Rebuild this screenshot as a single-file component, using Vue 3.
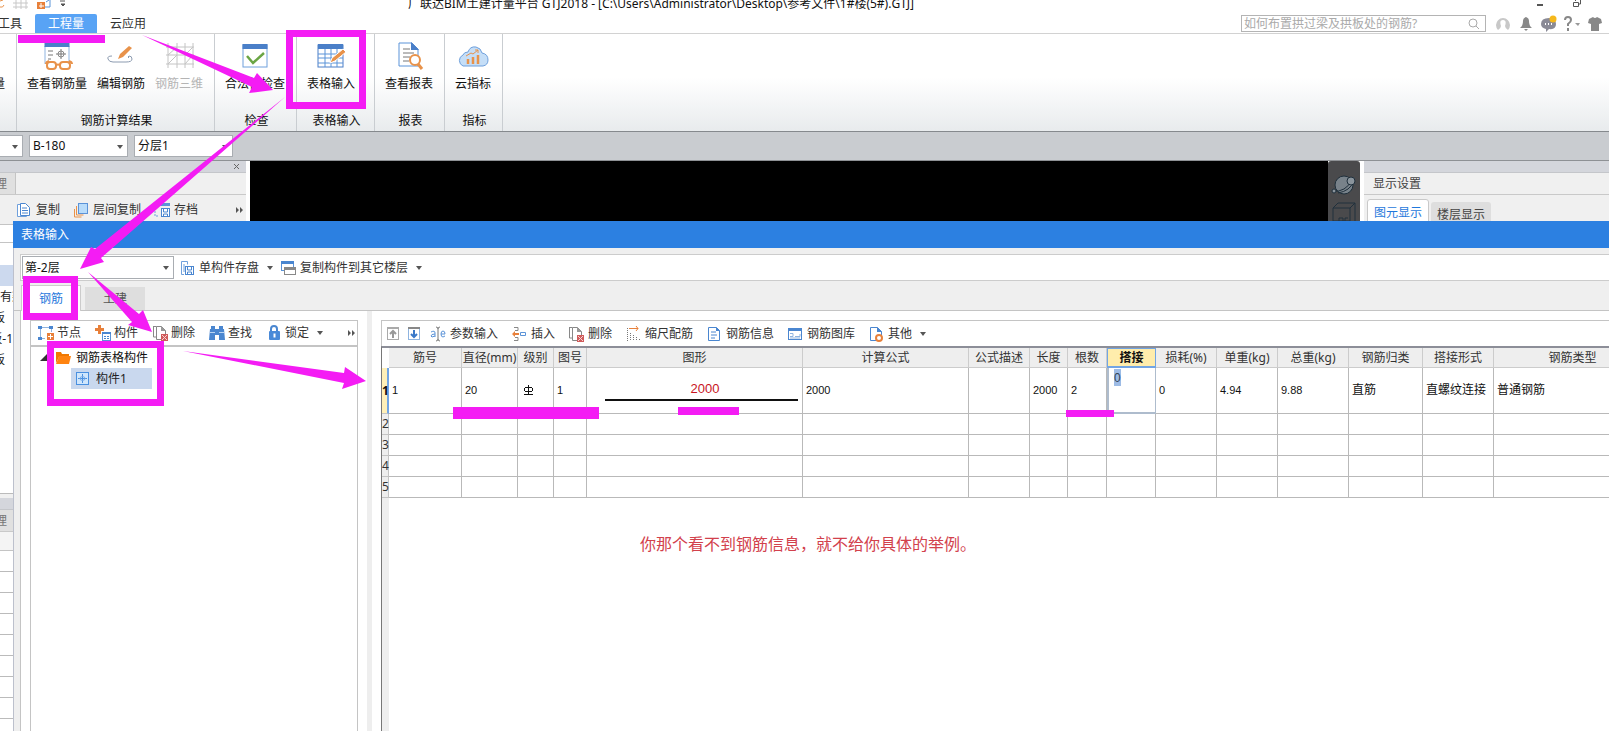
<script setup>
import { ref } from 'vue'

const icons = {
  viewBars: '<path d="M4 4V22M28 4V22" stroke="#8fb4e0" fill="none"/><path d="M3.500 1h25v4h-25z" fill="#4a7fc8"/><path d="M7 9h5M7 13h5M7 17h3M15 12h10M20 7v10" stroke="#777" fill="none"/><path d="M17 12q0-3 3-3t3 3-3 3-3-3" stroke="#888" fill="none"/><g fill="none" stroke="#e8924a" stroke-width="2"><path d="M8 19q-3 1-3 3M28 19q3 1 3 3M15 23q2-1 4 0"/><rect x="6" y="20" width="9" height="7" rx="3"/><rect x="19" y="20" width="10" height="7" rx="3"/></g>',
  editBars: '<path d="M7 14q-5 0-4 3t5 3h13q6 0 6-3t-3-3q-2 1 0 2" stroke="#8c9bb0" fill="none"/><path d="M13 17l2-5L24 4l3 2-9 9z" fill="#e8924a"/>',
  bars3d: '<path d="M5 1v25M14 1v25M22 1v25M30 1v25M3 5h28M3 13h28M3 22h28M5 13l9-8M22 13l8-8M5 22l9-9M22 22l8-9" stroke="#c4c4c4" fill="none"/>',
  check: '<rect x="4" y="3" width="24" height="22" fill="#fff" stroke="#6fa0dc"/><path d="M3.500 2h25v5h-25z" fill="#4a7fc8"/><path d="M8 14l6 7L25 11" stroke="#6aa544" stroke-width="2.500" fill="none"/>',
  tableInput: '<rect x="3" y="3" width="25" height="22" fill="#fff" stroke="#4a7fc8"/><path d="M3 2h25v5H3z" fill="#4a7fc8"/><path d="M3 12h25M3 16h25M3 21h25M10 7v18M16 7v18M22 7v18" stroke="#5b93d8" fill="none"/><path d="M15 21l2-5L28 7l3 3-11 9z" fill="#e8924a" stroke="#fff"/>',
  report: '<path d="M6 1h13l6 6v17H6z" fill="#fff" stroke="#5b93d8"/><path d="M18 0l8 8h-8z" fill="#4a7fc8"/><path d="M10 7h7M10 11h11M10 15h7M10 19h6" stroke="#777" fill="none"/><circle cx="22" cy="18" r="5" stroke="#e8924a" stroke-width="2" fill="#fff"/><path d="M25 22l4 5" stroke="#e8924a" stroke-width="3"/>',
  cloud: '<path d="M6 24a6 6 0 0 1 0-11q1-3 5-3 2-6 8-5 5 1 6 6 6 1 6 7 0 5-5 6z" fill="#c5def7" stroke="#6fa0dc"/><path d="M11 17v5M16 15v7M21 13v9" stroke="#e8924a" stroke-width="2.500"/><path d="M9 14l5-3 2 1 5-4M18 8h3v3" stroke="#e8924a" fill="none"/>',
  copy: '<path d="M1.500 2.500h3v10h6v2h-9z" fill="#fff" stroke="#6fa0dc"/><path d="M4.500 1.500h5l4 4v8h-9z" fill="#fff" stroke="#4a86d0"/><path d="M6 6h5M6 8.500h6M6 11h6" stroke="#4a86d0"/>',
  layers: '<path d="M1.500 7v8h7" fill="none" stroke="#e8924a"/><path d="M3.500 4v9h7" fill="none" stroke="#e8924a"/><rect x="5.500" y="1.500" width="9" height="10" fill="#b9dcfa" stroke="#5b93d8"/>',
  archive: '<path d="M1 6v8h4" stroke="#6fa0dc" stroke-dasharray="2 1" fill="none"/><path d="M5 1h11v3H5z" fill="#5b93d8"/><rect x="7.500" y="6.500" width="8" height="8" fill="#fff" stroke="#4a86d0"/><path d="M9.500 7v3h4V7M9.500 14v-2h4v2" stroke="#4a86d0" fill="none"/>',
  save: '<path d="M5 14.500H2.500v-13h6v3M5 4v8" stroke="#6fa0dc" fill="none"/><rect x="6.500" y="6.500" width="8" height="8" fill="#fff" stroke="#4a86d0"/><path d="M8.500 7v3h4V7M8.500 14v-2h4v2" stroke="#4a86d0" fill="none"/>',
  copyTo: '<rect x="1.500" y="1.500" width="12" height="9" fill="#fff" stroke="#5b93d8"/><path d="M1 1h13v3H1z" fill="#4a86d0"/><rect x="4.500" y="7.500" width="11" height="7" fill="#fff" stroke="#888"/><path d="M4 7h12v3H4z" fill="#888"/>',
  node: '<path d="M2.500 3v10M3 2.500h10M13.500 3v4M3 13.500h4" stroke="#8fb4e0"/><path d="M0 1h4v3H0zM11 1h4v3h-4zM0 12h4v3H0z" fill="#4a86d0"/><path d="M9 8h7v7H9z" fill="#e8803a"/><path d="M12.500 9v5M10 11.500h5" stroke="#fff"/>',
  member: '<path d="M3 0h3v3h3v3H6v3H3V6H0V3h3z" fill="#e8803a"/><rect x="7.500" y="7.500" width="8" height="8" fill="#fff" stroke="#5b93d8"/><path d="M7 7h9v2H7z" fill="#4a86d0"/><path d="M9 11.500h2M12 11.500h2M9 13.500h2M12 13.500h2" stroke="#4a86d0"/>',
  remove: '<path d="M1.500 1.500h3M1.500 1v11h3" stroke="#888" fill="none"/><path d="M4.500 1.500h5l4 4v9h-9z" fill="#fff" stroke="#888"/><path d="M9 1v5h5z" fill="#999"/><path d="M9 9h7v7H9z" fill="#d05b5b"/><path d="M10 10l5 5M15 10l-5 5" stroke="#f6d5d5"/>',
  find: '<path d="M2 1h4v3h4V1h4v3h1l1 11h-6v-5H6v5H0L1 4h1z" fill="#4a86d0"/><path d="M1 7.500h5M10 7.500h5" stroke="#b9d4f2"/>',
  lock: '<path d="M5 7V4q0-3 3-3t3 3v3" stroke="#4a86d0" stroke-width="2" fill="none"/><rect x="3" y="6" width="11" height="9" rx="1" fill="#4a8ad8"/><path d="M8.500 8.500v4" stroke="#fff" stroke-width="2"/>',
  up: '<rect x="1.500" y="1.500" width="11" height="12" fill="#fff" stroke="#aaa"/><path d="M1 1h12v2H1z" fill="#aaa"/><path d="M7 12V6M4 8l3-3 3 3" stroke="#999" stroke-width="2" fill="none"/>',
  down: '<rect x="1.500" y="1.500" width="11" height="12" fill="#fff" stroke="#8fb4e0"/><path d="M1 1h12v2H1z" fill="#888"/><path d="M7 4v7M4 8l3 3 3-3" stroke="#3a78c8" stroke-width="2" fill="none"/>',
  params: '<g fill="none" stroke="#5b93d8"><path d="M1 6q4-2 4 1v4M5 8q-4 0-4 2t4 0"/><path d="M11 8h4q0-3-2-3t-2 3 2 3l2-1"/></g><path d="M6 1q2 0 2 2v10M10 1q-2 0-2 2M6 15q2 0 2-2 0 2 2 2" stroke="#777" fill="none"/>',
  insert: '<path d="M3 1.500h4v3H4M3 14.500h4v-3H4" fill="none" stroke="#888"/><path d="M1 8l3-3v2h4v2H4v2z" fill="#e8803a"/><path d="M9.500 6.500h5v3h-5z" fill="#fff" stroke="#5b93d8"/>',
  scale: '<path d="M2.500 2v13M5.500 7v8M8.500 9v6M11.500 11v4M14.500 13v2" stroke="#777" stroke-dasharray="1 1"/><path d="M4 2.500h9M11 0l2 2.500-2 2.500" stroke="#e8803a" fill="none"/>',
  info: '<path d="M2.500 1.500h8l3 3v10h-11z" fill="#fff" stroke="#4a86d0"/><path d="M10 1v4h4z" fill="#4a86d0"/><path d="M5 6h5M5 9h6M5 12h4" stroke="#4a86d0"/>',
  gallery: '<rect x="1.500" y="2.500" width="13" height="11" fill="#fff" stroke="#4a86d0"/><path d="M1 2h14v3H1z" fill="#4a86d0"/><path d="M3 7.500h3v3H3M8 10.500h5V8M3 12h10" stroke="#8fb4e0" fill="none"/>',
  other: '<path d="M2.500 1.500h7l4 4v9h-11z" fill="#fff" stroke="#4a86d0"/><path d="M9 1v5h5z" fill="#4a86d0"/><circle cx="11" cy="12" r="3" fill="#fff" stroke="#e8803a" stroke-width="2"/>',
  folder: '<path d="M1 2h5l1 2h7v3H4l-3 6z" fill="#f07800"/><path d="M4 6h12l-2 8H1z" fill="#ff8410"/>',
  part: '<rect x="1.500" y="1.500" width="12" height="12" fill="#cfe6fc" stroke="#4a90e0"/><path d="M3 7.500h9M7.500 3v9" stroke="#4a90e0"/><path d="M5 7.500q0-2 2.500-2t2.500 2-2.500 2-2.500-2" fill="none" stroke="#7fb0ea"/>'
}

const ribbon = [
  { title: '钢筋计算结果', items: [['viewBars', '查看钢筋量'], ['editBars', '编辑钢筋'], ['bars3d', '钢筋三维', true]] },
  { title: '检查', items: [['check', '合法性检查']] },
  { title: '表格输入', items: [['tableInput', '表格输入']], wide: true },
  { title: '报表', items: [['report', '查看报表']] },
  { title: '指标', items: [['cloud', '云指标']] }
]
const paneTools = [['copy', '复制'], ['layers', '层间复制'], ['archive', '存档']]
const treeTools = [['node', '节点'], ['member', '构件'], ['remove', '删除'], ['find', '查找'], ['lock', '锁定']]
const gridTools = [
  ['params', '参数输入'], ['insert', '插入'], ['remove', '删除'], ['scale', '缩尺配筋'],
  ['info', '钢筋信息'], ['gallery', '钢筋图库'], ['other', '其他']
]
const columns = [
  ['筋号', 73], ['直径(mm)', 56], ['级别', 36], ['图号', 33], ['图形', 216], ['计算公式', 166],
  ['公式描述', 61], ['长度', 38], ['根数', 39], ['搭接', 49], ['损耗(%)', 61], ['单重(kg)', 61],
  ['总重(kg)', 71], ['钢筋归类', 74], ['搭接形式', 71], ['钢筋类型', 158]
]
const values = ['1', '20', '', '1', '2000', '2000', '', '2000', '2', '0', '0', '4.94', '9.88', '直筋', '直螺纹连接', '普通钢筋']
const overlap = ref('0')
const keyword = ref('')
</script>

<template>
  <div class="app">
    <header class="titlebar">
      <svg class="quick" width="72" height="12">
        <path d="M0 7q3 1 4-2M0 1l3-1" stroke="#e8924a" fill="none" />
        <path d="M13 3h15M13 7h15M16 0v9M21 0v9M26 0v9" stroke="#c8c8c8" />
        <path d="M37 2h8v7h-8z" fill="#e8803a" /><path d="M41 3v5M39 6h5" stroke="#fff" />
        <path d="M45 7h5V0M46 2l3-2" stroke="#5b93d8" fill="none" />
        <path d="M60 1h5M61 4h4l-2 2z" stroke="#555" fill="#555" />
      </svg>
      <h1>广联达BIM土建计量平台 GTJ2018 - [C:\Users\Administrator\Desktop\参考文件\1#楼(5#).GTJ]</h1>
      <div class="winbtns">
        <button aria-label="最小化"><svg width="10" height="10"><path d="M2 5h6" stroke="#555" stroke-width="2" /></svg></button>
        <button aria-label="还原"><svg width="10" height="10"><path d="M1.500 2.500h5v4h-5zM3.500 1V0M8.500 0v4H7" stroke="#555" fill="none" /></svg></button>
      </div>
    </header>

    <nav class="menu">
      <a href="#" class="clipped">工具</a>
      <a href="#" class="active">工程量</a>
      <a href="#">云应用</a>
      <div class="search">
        <input v-model="keyword" aria-label="搜索" placeholder="如何布置拱过梁及拱板处的钢筋?" />
        <svg width="14" height="14"><circle cx="6" cy="6" r="4" fill="none" stroke="#aaa" /><path d="M9 9l3 3" stroke="#aaa" /></svg>
      </div>
      <svg class="status" width="110" height="18">
        <path d="M3 15A7 7 0 1 1 13 15Q10 13 10 11 12 5 8 5T6 11Q6 13 3 15z" fill="#c8c8c8" />
        <path d="M25 13q3-2 3-7 0-3 3-4 3 1 3 4 0 5 3 7zM29 14h4l-2 2z" fill="#888" />
        <path d="M54 3q7 0 7 6t-7 5l-3 3v-3q-5-1-5-5 0-6 8-6z" fill="#8a8a96" /><path d="M50 9h1M53 9h1M56 9h1" stroke="#fff" stroke-width="2" /><circle cx="58" cy="4" r="3.500" fill="#f5b81c" />
        <path d="M70 5q0-3 3-3t3 3q0 2-3 4v2M73 13v3" stroke="#888" stroke-width="2" fill="none" />
        <path d="M80 8h5l-2 3z" fill="#999" />
        <path d="M94 4l4-2q2 2 4 0l4 2 1 4-3 1v7h-8V9l-3-1z" fill="#888" />
      </svg>
    </nav>

    <section class="ribbon">
      <div class="group edge"><span>量</span></div>
      <div v-for="g in ribbon" :key="g.title" class="group" :class="{ wide: g.wide }">
        <div class="cmds">
          <button v-for="c in g.items" :key="c[1]" :disabled="c[2]">
            <svg width="32" height="28" v-html="icons[c[0]]"></svg>{{ c[1] }}
          </button>
        </div>
        <div class="gtitle">{{ g.title }}</div>
      </div>
    </section>

    <section class="scopebar">
      <span class="pick first"><select aria-label="类型"><option></option></select></span>
      <span class="pick"><select aria-label="构件"><option>B-180</option></select></span>
      <span class="pick"><select aria-label="分层"><option>分层1</option></select></span>
    </section>

    <main>
      <aside class="left">
        <div class="strip"><button aria-label="关闭"><svg width="8" height="8"><path d="M1 1l5 5M6 1l-5 5" stroke="#666" /></svg></button></div>
        <div class="tabrow"><span>理</span></div>
        <div class="tools">
          <button v-for="t in paneTools" :key="t[1]"><svg width="16" height="16" v-html="icons[t[0]]"></svg>{{ t[1] }}</button>
          <svg class="more" width="8" height="8"><path d="M0 1l3 3-3 3zM4 1l3 3-3 3z" fill="#555" /></svg>
        </div>
        <div class="peek">
          <div class="gap"></div>
          <div class="sel"></div>
          <div class="name start">有梁</div>
          <div class="name">板</div>
          <div class="name full">板-1</div>
          <div class="name">板</div>
        </div>
        <div class="props">
          <div class="strip"></div>
          <div class="tabrow"><span>理</span></div>
          <div class="subhead"></div>
          <div v-for="n in 9" :key="n" class="line"></div>
        </div>
      </aside>
      <div class="canvas"></div>
      <div class="viewtools">
        <svg width="32" height="60">
          <circle cx="16" cy="24" r="9" fill="#78828a" stroke="#20303c" /><path d="M5 30q12 2 20-12M10 32q12-2 16-12" stroke="#20303c" fill="none" /><circle cx="23" cy="20" r="4" fill="#8a949c" stroke="#20303c" /><circle cx="6" cy="30" r="2" fill="#8a949c" stroke="#20303c" />
          <path d="M5 47h17v13H5zM5 47l5-5h17l-5 5M27 42v18M11 60v-3h4v3M17 60v-3h3" fill="none" stroke="#20303c" />
        </svg>
      </div>
      <aside class="right">
        <div class="strip"></div>
        <h2>显示设置</h2>
        <div class="dtabs"><button class="on">图元显示</button><button>楼层显示</button></div>
      </aside>
    </main>

    <section class="dialog" role="dialog" aria-label="表格输入">
      <h2>表格输入</h2>
      <div class="dbar">
        <span class="pick floor"><select aria-label="楼层"><option>第-2层</option></select></span>
        <button><svg width="16" height="16" v-html="icons.save"></svg>单构件存盘<i class="caret"></i></button>
        <button><svg width="16" height="16" v-html="icons.copyTo"></svg>复制构件到其它楼层<i class="caret"></i></button>
      </div>
      <div class="tabs"><button class="on">钢筋</button><button>土建</button></div>
      <div class="body">
        <div class="tree">
          <div class="tbar">
            <button v-for="t in treeTools" :key="t[1]"><svg width="16" height="16" v-html="icons[t[0]]"></svg>{{ t[1] }}<i v-if="t[0] === 'lock'" class="caret"></i></button>
            <svg class="more" width="8" height="8"><path d="M0 1l3 3-3 3zM4 1l3 3-3 3z" fill="#555" /></svg>
          </div>
          <div class="root"><svg width="8" height="8"><path d="M7 0v7H0z" fill="#333" /></svg><svg width="16" height="16" v-html="icons.folder"></svg>钢筋表格构件</div>
          <div class="leaf"><svg width="16" height="16" v-html="icons.part"></svg>构件1</div>
        </div>
        <div class="splitter"></div>
        <div class="grid">
          <div class="gbar">
            <div class="moves">
              <button aria-label="上移"><svg width="16" height="16" v-html="icons.up"></svg></button>
              <button aria-label="下移"><svg width="16" height="16" v-html="icons.down"></svg></button>
            </div>
            <button v-for="t in gridTools" :key="t[1]"><svg width="16" height="16" v-html="icons[t[0]]"></svg>{{ t[1] }}<i v-if="t[0] === 'other'" class="caret"></i></button>
          </div>
          <div class="sheet">
            <table>
              <colgroup><col class="numcol" /><col v-for="c in columns" :key="c[0]" :style="{ width: c[1] + 'px' }" /></colgroup>
              <thead>
                <tr><td class="corner"></td><th v-for="c in columns" :key="c[0]" :class="{ current: c[0] === '搭接' }">{{ c[0] }}</th></tr>
              </thead>
              <tbody>
                <tr class="first">
                  <th class="current">1</th>
                  <td v-for="(v, i) in values" :key="i" :class="{ editing: i === 9 }">
                    <div v-if="i === 4" class="shape">{{ v }}</div>
                    <input v-else-if="i === 9" v-model="overlap" aria-label="搭接" />
                    <svg v-else-if="i === 2" class="grade" width="12" height="12" role="img" aria-label="三级钢"><path d="M5.500 1v10M1 10.500h9M2 3.500h7M2 7.500h7M1.500 4v3M9.500 4v3" fill="none" stroke="#111" /></svg>
                    <template v-else>{{ v }}</template>
                  </td>
                </tr>
                <tr v-for="n in [2, 3, 4, 5]" :key="n"><th>{{ n }}</th><td v-for="c in columns" :key="c[0]"></td></tr>
              </tbody>
            </table>
          </div>
        </div>
      </div>
    </section>

    <p class="remark">你那个看不到钢筋信息，就不给你具体的举例。</p>
    <svg class="marks" aria-hidden="true">
      <g fill="none" stroke-width="7">
        <rect x="289.500" y="33.500" width="73" height="72" />
        <rect x="26.500" y="279.500" width="48" height="37" />
        <rect x="50.500" y="344.500" width="110" height="58" />
      </g>
      <g stroke="none">
        <path d="M18 35h87v8H18zM453 407h146v12H453zM678 407h61v8h-61zM1066 410h48v7h-48z" />
        <path d="M142 35L254 78L257 73L273 90L249 93L252 87z" />
        <path d="M285 97L95 249L91 247L80 269L104 262L101 258z" />
        <path d="M88 272L139 314L143 310L152 332L128 325L132 322z" />
        <path d="M183 351L344 373L345 367L366 381L342 389L344 383z" />
      </g>
    </svg>
  </div>
</template>

<style>
body { margin: 0; }
</style>

<style scoped>
.app {
  position: relative; display: flex; flex-direction: column; height: 100vh; overflow: hidden;
  background: #fff; color: #222;
  font: 12px/16px "Noto Sans", "Noto Sans CJK SC", sans-serif;
}
.app *, .app *::before { box-sizing: border-box; }
button, input, select { font: inherit; color: inherit; margin: 0; padding: 0; border: 0; background: none; border-radius: 0; outline: 0; }
button { display: flex; align-items: center; white-space: nowrap; }
svg { display: block; flex: none; }
h1, h2, p { margin: 0; font-weight: normal; }
.caret { border: 3px solid transparent; border-top: 4px solid #555; border-bottom: 0; margin-left: 8px; }

.titlebar { display: flex; height: 14px; align-items: flex-start; }
.quick { width: 72px; }
h1 { flex: 1; padding-left: 336px; font-size: 12px; line-height: 20px; height: 20px; margin-top: -6px; color: #111; white-space: nowrap; }
.winbtns { display: flex; gap: 27px; padding-right: 27px; }

.menu { display: flex; align-items: center; height: 20px; border-bottom: 1px solid #d2d2d2; flex: none; }
.menu a { height: 19px; line-height: 20px; color: #333; text-decoration: none; white-space: nowrap; }
.menu .clipped { width: 22px; display: flex; justify-content: flex-end; }
.menu .active { width: 62px; margin: 0 13px; text-align: center; background: #58a3f5; color: #fff; border-radius: 2px 2px 0 0; }
.search { display: flex; align-items: center; margin-left: auto; width: 245px; height: 17px; border: 1px solid #b4b4b4; padding: 0 4px 0 2px; }
.search input { flex: 1; min-width: 0; height: 15px; }
.search input::placeholder { color: #aaa; opacity: 1; }
.status { margin: 0 4px 0 9px; }

.ribbon { display: flex; flex: none; height: 98px; background: linear-gradient(#fff 45%, #e8ebed); border-bottom: 1px solid #85898d; }
.group { display: flex; flex-direction: column; justify-content: space-between; padding: 8px 11px 2px 10px; border-right: 1px solid #c9cdd1; color: #111; }
.group.wide { width: 78px; }
.group.edge { width: 17px; padding: 42px 11px 0 0; align-items: flex-end; justify-content: flex-start; overflow: hidden; }
.cmds { display: flex; gap: 10px; }
.cmds button { flex-direction: column; gap: 6px; }
.cmds button:disabled { color: #b4b4b4; }
.gtitle { padding-left: 3px; text-align: center; white-space: nowrap; }

.scopebar { display: flex; flex: none; align-items: center; gap: 6px; height: 29px; background: #c9ccd0; border-bottom: 1px solid #8e9195; }
.pick { position: relative; width: 99px; height: 22px; border: 1px solid #a9adb2; background: #fff; }
.pick.first { width: 23px; border-left: 0; }
.pick select { appearance: none; width: 100%; height: 20px; padding-left: 3px; color: #111; display: block; }
.pick::after { content: ""; position: absolute; right: 4px; top: 9px; border: 3px solid transparent; border-top: 4px solid #555; border-bottom: 0; pointer-events: none; }

main { display: flex; flex: 1; min-height: 0; }
.strip { display: flex; justify-content: flex-end; align-items: center; height: 12px; padding-right: 5px; background: #d4d6dc; border-bottom: 1px solid #c4c6ca; }
.tabrow { height: 22px; background: #f0f0f0; border-bottom: 1px solid #c9c9c9; }
.tabrow span { display: flex; justify-content: flex-end; width: 16px; height: 21px; line-height: 21px; padding-right: 8px; overflow: hidden; background: #e0e0e0; color: #777; border-right: 1px solid #c4c4c4; }
.left { width: 250px; border-right: 4px solid #fff; background: #f0f0f0; overflow: hidden; }
.tools { display: flex; align-items: center; gap: 13px; height: 30px; padding: 0 2px 0 16px; border-bottom: 1px solid #c4c4c4; color: #333; }
.tools button { gap: 4px; }
.more { margin-left: auto; }
.peek { height: 269px; background: #fff; border-bottom: 1px solid #bbb; }
.peek .gap { height: 18px; margin-bottom: 22px; border-bottom: 1px solid #c4c4c4; }
.peek .sel { height: 21px; background: #ccd9ee; }
.name { display: flex; justify-content: flex-end; width: 13px; height: 21px; line-height: 21px; padding-right: 8px; overflow: hidden; white-space: nowrap; }
.name.start { justify-content: flex-start; padding: 0; }
.name.full { padding: 0; }
.props { margin-top: 4px; background: #fff; }
.subhead { height: 19px; background: #f4f4f4; border-bottom: 1px solid #c4c4c4; }
.line { height: 21px; border-bottom: 1px solid #bbb; }
.canvas { flex: 1; background: #000; }
.viewtools { width: 32px; background: #4a4a4c; border-radius: 3px 3px 0 0; }
.right { width: 249px; border-left: 4px solid #fff; background: #f0f0f0; }
.right h2 { height: 22px; padding-left: 9px; font-size: 12px; line-height: 22px; color: #444; border-bottom: 1px solid #c9c9c9; }
.dtabs { display: flex; align-items: flex-end; gap: 2px; padding: 4px 3px 0; }
.dtabs button { justify-content: center; width: 60px; height: 25px; background: #dedede; border-radius: 3px 3px 0 0; color: #444; }
.dtabs .on { width: 62px; height: 28px; background: #fff; border: 1px solid #c9c9c9; color: #1f78dc; }

.dialog { position: absolute; inset: 221px 0 0 13px; display: flex; flex-direction: column; background: #efefef; border-left: 1px solid #bcc0cc; }
.dialog > h2 { height: 27px; margin-left: -1px; padding-left: 8px; background: #2c80e1; color: #fff; font-size: 12px; line-height: 27px; flex: none; }
.dbar { display: flex; align-items: center; flex: none; height: 27px; margin: 6px 0 0 6px; padding-left: 1px; background: #fff; border: 1px solid #ccc; border-right: 0; color: #333; }
.dbar button { gap: 4px; margin-left: 5px; }
.dbar button + button { margin-left: 7px; }
.dbar .caret { margin-left: 4px; }
.pick.floor { width: 152px; height: 23px; }
.pick.floor select { padding-left: 2px; height: 21px; }
.tabs { display: flex; align-items: flex-end; gap: 4px; flex: none; height: 30px; padding-left: 7px; border-bottom: 1px solid #c4c4c4; }
.tabs button { justify-content: center; width: 60px; height: 23px; background: #dedede; color: #555; }
.tabs .on { height: 26px; margin-bottom: -1px; background: #fff; border: 1px solid #ccc; border-bottom: 0; color: #1f78dc; }
.body { display: flex; flex: 1; min-height: 0; margin-left: 6px; padding-left: 9px; background: #fff; border-left: 1px solid #c4c4c4; }
.tree { width: 328px; margin-top: 9px; border: 1px solid #c4c4c4; border-bottom: 0; }
.tbar, .gbar { display: flex; align-items: center; height: 26px; color: #333; }
.tbar { gap: 14px; padding: 0 1px 0 7px; border-bottom: 2px solid #c4c4c4; }
.tbar button { gap: 3px; }
.tbar .caret { margin-left: 5px; }
.root { display: flex; align-items: center; height: 21px; padding-left: 9px; color: #111; }
.root svg + svg { margin: 0 5px 0 7px; }
.leaf { display: flex; align-items: center; gap: 5px; width: 81px; height: 21px; margin-left: 40px; padding-left: 4px; background: #c9d8ee; }
.splitter { width: 5px; margin: 0 9px; background: #eee; }
.grid { flex: 1; min-width: 0; display: flex; flex-direction: column; margin-top: 9px; border-top: 1px solid #c4c4c4; }
.gbar { gap: 12px; padding-left: 4px; border-left: 1px solid #c4c4c4; height: 25px; flex: none; }
.gbar button { gap: 4px; }
.gbar > button + button { margin-left: 1px; }
.moves { display: flex; gap: 5px; margin-right: -5px; }
.gbar .caret { margin-left: 4px; }
.sheet { flex: 1; min-height: 0; overflow: hidden; border-top: 2px solid #8c8e98; border-left: 1px solid #777; background: linear-gradient(90deg, #eee 7px, #fff 7px); }
table { width: 1269px; table-layout: fixed; border-collapse: separate; border-spacing: 0; }
.numcol { width: 7px; }
th, td { height: 21px; padding: 0; border-right: 1px solid #b9b9b9; border-bottom: 1px solid #b9b9b9; white-space: nowrap; font-weight: normal; }
thead th { height: 20px; background: #eee; color: #333; border-color: #ccc; }
thead th.current { background: #ffedac; border: 1px solid #72a5e4; border-bottom-width: 2px; color: #111; font-weight: bold; line-height: 15px; }
.corner { background: #fff; border: 0; height: 20px; }
tbody th { background: #eee; color: #333; border-color: #c4c4c4; overflow: visible; }
tbody th.current { background: #fff0b8; font-weight: bold; border-right: 2px solid #72a5e4; color: #111; }
.first td, .first th { height: 46px; }
.first td { padding-bottom: 2px; }
tbody td { padding-left: 3px; font: 11px/16px "Liberation Sans", "Noto Sans CJK SC", sans-serif; color: #111; }
.first td:nth-last-child(-n+3) { font-size: 12px; }
.first td.editing { padding: 0; border: 2px solid #aebccd; border-top: 0; border-right-width: 1px; vertical-align: top; }
.editing input { display: block; width: 7px; height: 17px; margin: 1px 0 0 5px; background: #9dbbe5; color: #345; font-size: 12px; }
.shape { width: 193px; margin-left: 15px; padding-left: 7px; border-bottom: 2px solid #111; text-align: center; color: #c8141e; font-size: 13px; line-height: 20px; }
.grade { margin-left: 2px; }

.remark { position: absolute; left: 640px; top: 531px; color: #d2414c; font: 16px/24px "Noto Sans CJK SC", sans-serif; }
.marks { position: absolute; inset: 0; width: 100%; height: 100%; fill: #f41cf4; stroke: #f41cf4; pointer-events: none; }
</style>
